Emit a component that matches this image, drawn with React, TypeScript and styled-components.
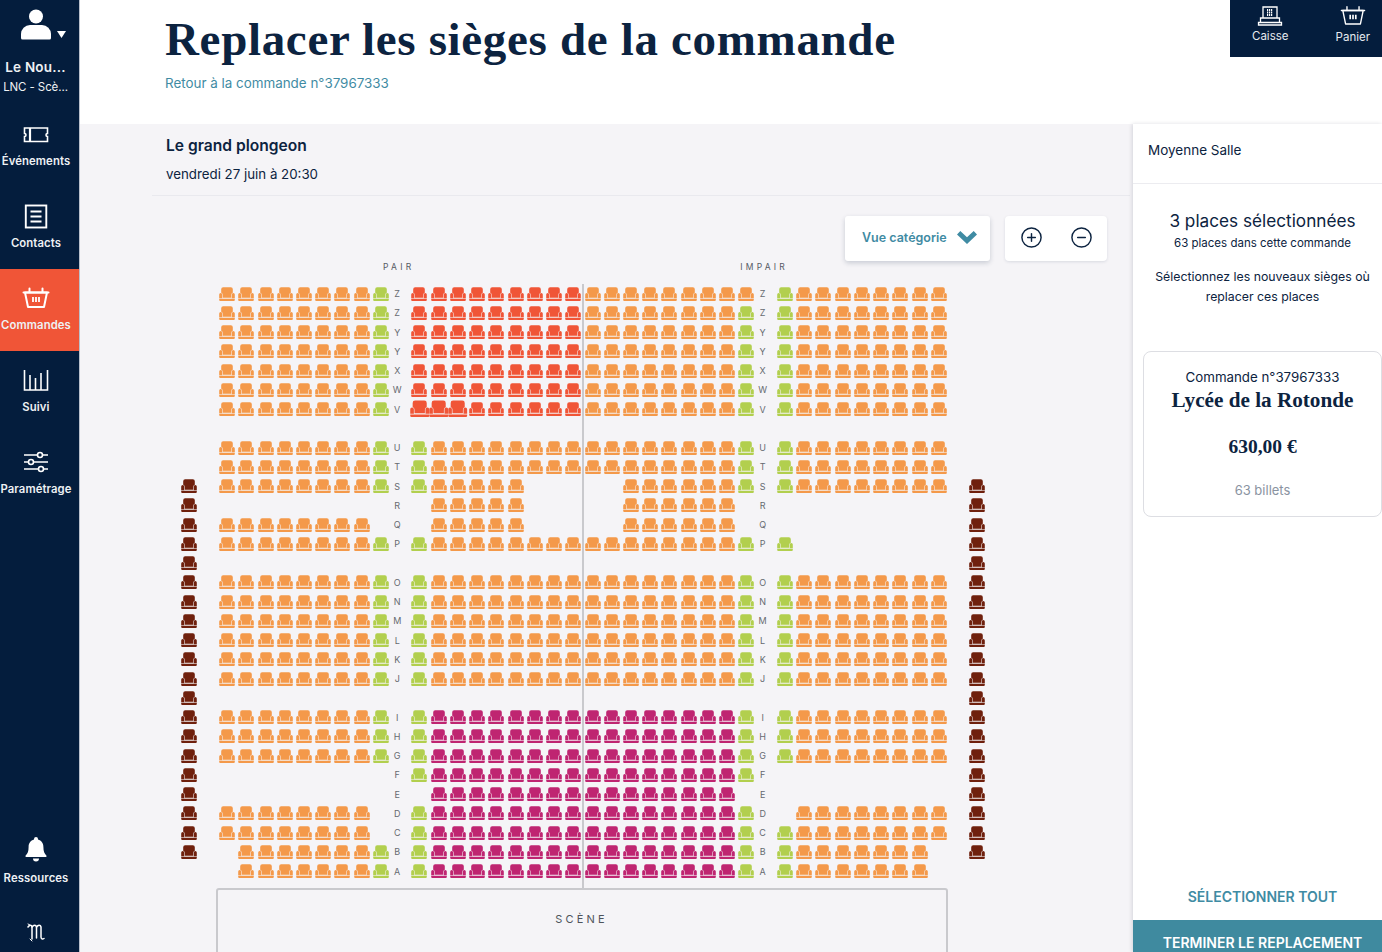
import React from "react";
import styled, { createGlobalStyle } from "styled-components";
import { CirclePlus, CircleMinus } from "lucide-react";

const NAVY = "#041d3d";
const TEAL = "#3f8ba3";
const SANS = `"Inter", "Liberation Sans", sans-serif`;
const SERIF = `"Liberation Serif", serif`;

const Global = createGlobalStyle`
  html, body { margin: 0; padding: 0; background: #f5f4f7; }
  * { box-sizing: border-box; }
`;

const Page = styled.div`
  display: flex;
  width: 1382px;
  height: 952px;
  overflow: hidden;
  font-family: ${SANS};
  color: #0c2340;
`;

const Sidebar = styled.nav`
  flex: 0 0 80px;
  width: 80px;
  display: flex;
  flex-direction: column;
  background: ${NAVY};
  border-right: 1px solid #b9c0cc;
  color: #eef1f4;
`;

const Account = styled.div`
  height: 105px;
  display: flex;
  flex-direction: column;
  align-items: center;
  padding: 9px 8px 0 0;
`;
const AccountName = styled.div`
  margin-top: 17px;
  font-size: 13.5px;
  line-height: 18px;
  font-weight: 600;
  letter-spacing: 0.2px;
`;
const AccountSub = styled.div`
  margin-top: 4px;
  font-size: 11.5px;
  line-height: 15px;
  letter-spacing: -0.1px;
`;

const NavItem = styled.a<{ $active?: boolean }>`
  height: 82px;
  flex: 0 0 82px;
  display: flex;
  flex-direction: column;
  align-items: center;
  padding: 17px 7px 0 0;
  background: ${(p) => (p.$active ? "#f05537" : "transparent")};
`;
const NavIcon = styled.svg`
  display: block;
  width: 28px;
  height: 26px;
  fill: none;
  stroke: #fff;
  stroke-width: 1.6;
`;
const NavLabel = styled.span`
  margin-top: 6px;
  font-size: 11.3px;
  line-height: 14px;
  font-weight: 600;
  letter-spacing: 0.1px;
  white-space: nowrap;
`;
const SideSpacer = styled.div`
  flex: 1;
`;
const ResourceItem = styled(NavItem)`
  height: 65px;
  flex: 0 0 65px;
  padding-top: 0;
  ${NavLabel} {
    margin-top: 9px;
  }
`;
const LogoBox = styled.div`
  height: 51px;
  display: flex;
  justify-content: center;
  padding: 20px 8px 0 0;
`;

const Main = styled.div`
  flex: 1;
  min-width: 0;
  display: flex;
  flex-direction: column;
`;

const Header = styled.header`
  flex: 0 0 124px;
  display: flex;
  justify-content: space-between;
  align-items: flex-start;
  background: #fff;
  padding-left: 85px;
`;
const TitleBlock = styled.div`
  padding-top: 12px;
`;
const Title = styled.h1`
  margin: 0;
  font-family: ${SERIF};
  font-size: 47px;
  line-height: 54px;
  font-weight: 700;
  letter-spacing: 0.67px;
  color: #0c2340;
  white-space: nowrap;
`;
const BackLink = styled.a`
  display: block;
  margin-top: 8px;
  font-size: 13.4px;
  line-height: 18px;
  color: ${TEAL};
`;
const HeaderTabs = styled.div`
  width: 152px;
  height: 57px;
  display: flex;
  justify-content: space-between;
  background: ${NAVY};
  padding: 0 12px 0 22px;
  color: #e6eaef;
`;
const HeaderTab = styled.div`
  display: flex;
  flex-direction: column;
  align-items: center;
  font-size: 11.5px;
  line-height: 14px;
`;
const TabIcon = styled.svg<{ $tight?: boolean }>`
  display: block;
  width: 26px;
  height: 25px;
  margin-top: 4px;
  margin-bottom: ${(p) => (p.$tight ? 0 : 1)}px;
  fill: none;
  stroke: #fff;
  stroke-width: 1.3;
`;

const Body = styled.div`
  flex: 1;
  min-height: 0;
  display: flex;
`;
const Content = styled.section`
  flex: 1;
  min-width: 0;
  background: #f5f4f7;
`;
const EventInfo = styled.div`
  height: 72px;
  margin-left: 72px;
  margin-right: 3px;
  padding: 12px 0 0 14px;
  border-bottom: 1px solid #e9e9ee;
`;
const EventName = styled.div`
  font-size: 15.6px;
  line-height: 20px;
  font-weight: 600;
`;
const EventDate = styled.div`
  margin-top: 9px;
  font-size: 13.3px;
  line-height: 18px;
`;
const Toolbar = styled.div`
  display: flex;
  justify-content: flex-end;
  gap: 15px;
  padding: 20px 26px 0 0;
`;
const ViewButton = styled.button`
  width: 145px;
  height: 45px;
  display: flex;
  align-items: center;
  justify-content: space-between;
  padding: 0 13px 2px 17px;
  border: 0;
  border-radius: 3px;
  background: #fff;
  box-shadow: 0 2px 5px rgba(20, 40, 70, 0.2);
  font-family: ${SANS};
  font-size: 12.5px;
  font-weight: 600;
  color: ${TEAL};
`;
const ZoomBox = styled.div`
  width: 102px;
  height: 45px;
  display: flex;
  align-items: center;
  justify-content: space-between;
  padding: 0 14px 2px 15px;
  border-radius: 4px;
  background: #fff;
  box-shadow: 0 1px 3px rgba(20, 40, 70, 0.12);
  color: #0c2340;
`;

const COLS = 42;
const PairRow = styled.div`
  display: grid;
  grid-template-columns: repeat(${COLS}, 19.245px);
  height: 23px;
  margin-left: 99px;
`;
const PairLabel = styled.div<{ $col: number }>`
  grid-column: ${(p) => p.$col};
  justify-self: center;
  margin-right: 3px;
  font-size: 8.5px;
  line-height: 12px;
  letter-spacing: 3.2px;
  color: #555a63;
  white-space: nowrap;
`;
const MapArea = styled.div`
  position: relative;
  width: max-content;
  margin-left: 99px;
`;
const SeatGrid = styled.div`
  display: grid;
  grid-template-columns: repeat(${COLS}, 19.245px);
  grid-auto-rows: 19.265px;
`;
const Cell = styled.div`
  display: flex;
  align-items: center;
  justify-content: center;
`;
const RowLetter = styled(Cell)`
  padding-right: 6px;
  font-size: 9px;
  color: #666a70;
`;
const SeatIcon = styled.svg<{ $big?: boolean }>`
  display: block;
  flex: none;
  width: ${(p) => (p.$big ? 19.4 : 16)}px;
  height: ${(p) => (p.$big ? 17.4 : 14)}px;
  color: ${(p) => p.color};
`;
const AisleLine = styled.div`
  position: absolute;
  top: 0;
  bottom: -8px;
  left: 403px;
  width: 2px;
  background: #c9c9cd;
`;
const Scene = styled.div`
  width: 732px;
  height: 80px;
  margin: 7px 0 0 135.500px;
  padding-top: 22px;
  border: 2px solid #c9c9cd;
  border-radius: 3px;
  text-align: center;
  font-size: 11px;
  line-height: 14px;
  letter-spacing: 3.2px;
  color: #4e535b;
`;

const Panel = styled.aside`
  flex: 0 0 249px;
  display: flex;
  flex-direction: column;
  background: #fff;
  box-shadow: -1px 0 4px rgba(20, 30, 60, 0.14);
`;
const PanelHead = styled.div`
  height: 60px;
  padding: 17px 0 0 15px;
  border-bottom: 1px solid #ececf0;
  font-size: 13.5px;
  line-height: 18px;
`;
const PanelBody = styled.div`
  flex: 1;
  display: flex;
  flex-direction: column;
  align-items: center;
  padding: 25px 0 0 10px;
`;
const SelCount = styled.div`
  font-size: 17.2px;
  line-height: 24px;
  white-space: nowrap;
`;
const SelSub = styled.div`
  margin-top: 2px;
  font-size: 11.5px;
  line-height: 16px;
  white-space: nowrap;
`;
const SelHint = styled.div`
  margin-top: 16px;
  width: 239px;
  text-align: center;
  font-size: 12.3px;
  line-height: 20px;
  white-space: nowrap;
`;
const OrderCard = styled.div`
  align-self: stretch;
  height: 166px;
  margin: 44px 0 0 0;
  padding-top: 16px;
  border: 1px solid #dddee3;
  border-radius: 8px;
  text-align: center;
`;
const OrderNo = styled.div`
  font-size: 13.3px;
  line-height: 18px;
`;
const OrderName = styled.div`
  margin-top: 1px;
  font-family: ${SERIF};
  font-size: 21.2px;
  line-height: 27px;
  font-weight: 700;
`;
const OrderPrice = styled.div`
  margin-top: 21px;
  font-family: ${SERIF};
  font-size: 19.5px;
  line-height: 24px;
  font-weight: 700;
`;
const OrderCount = styled.div`
  margin-top: 22px;
  font-size: 13px;
  line-height: 18px;
  color: #8a93a1;
`;
const SelectAll = styled.a`
  margin-top: auto;
  margin-bottom: 14px;
  font-size: 14px;
  line-height: 18px;
  font-weight: 600;
  color: ${TEAL};
`;
const FinishButton = styled.button`
  flex: 0 0 32px;
  height: 32px;
  padding: 14px 0 0 10px;
  border: 0;
  background: #3f8a9f;
  font-family: ${SANS};
  font-size: 14px;
  line-height: 16px;
  font-weight: 600;
  color: #fff;
  white-space: nowrap;
  overflow: hidden;
`;

const COLORS: Record<string, string> = {
  o: "#f4994a",
  g: "#b2cf4e",
  r: "#f05537",
  S: "#f05537",
  m: "#bf2571",
  d: "#6f200d",
};

function Seat({ kind }: { kind: string }) {
  return (
    <SeatIcon viewBox="0 0 16 14" color={COLORS[kind]} $big={kind === "S"}>
      <path
        fill="currentColor"
        d="M4.2.2h7.6a2 2 0 0 1 2 2v3.6a2 2 0 0 0-1.500 2v3H3.700v-3a2 2 0 0 0-1.500-2V2.200a2 2 0 0 1 2-2z"
      />
      <path
        fill="currentColor"
        d="M.2 7.500a1.500 1.500 0 0 1 3 0v3.700h9.600V7.500a1.500 1.500 0 0 1 3 0v3.700H.2z"
      />
      <path fill="currentColor" d="M.2 11.800h15.600v1.100a1 1 0 0 1-1 1H1.200a1 1 0 0 1-1-1z" />
    </SeatIcon>
  );
}

const O8 = "oooooooo";
const O16 = O8 + O8;
const M16 = "m".repeat(16);
const LEFT = O8 + "g";
const RIGHT = "g" + O8;
const NONE = ".........";
const STD = "g" + O16 + "g";
const MAG = "g" + M16 + "g";
const RED = "rrrrrrrrr";
const SHORT_LEFT = ".ooooooog";
const SHORT_RIGHT = "gooooooo.";

type Row = { label: string; left: string; mid: string; right: string };
const r = (label: string, left: string, mid: string, right: string): Row => ({ label, left, mid, right });
const GAP = r("", NONE, ".".repeat(18), NONE);

const ROWS: Row[] = [
  r("Z", LEFT, RED + "ooooooooo", RIGHT),
  r("Z", LEFT, RED + O8 + "g", RIGHT),
  r("Y", LEFT, RED + O8 + "g", RIGHT),
  r("Y", LEFT, RED + O8 + "g", RIGHT),
  r("X", LEFT, RED + O8 + "g", RIGHT),
  r("W", LEFT, RED + O8 + "g", RIGHT),
  r("V", LEFT, "SSSrrrrrr" + O8 + "g", RIGHT),
  GAP,
  r("U", LEFT, STD, RIGHT),
  r("T", LEFT, STD, RIGHT),
  r("S", LEFT, "gooooo.....oooooog", RIGHT),
  r("R", NONE, ".ooooo.....oooooo.", NONE),
  r("Q", O8 + ".", ".ooooo.....oooooo.", NONE),
  r("P", LEFT, STD, "g........"),
  GAP,
  r("O", LEFT, STD, RIGHT),
  r("N", LEFT, STD, RIGHT),
  r("M", LEFT, STD, RIGHT),
  r("L", LEFT, STD, RIGHT),
  r("K", LEFT, STD, RIGHT),
  r("J", LEFT, STD, RIGHT),
  GAP,
  r("I", LEFT, MAG, RIGHT),
  r("H", LEFT, MAG, RIGHT),
  r("G", LEFT, MAG, RIGHT),
  r("F", NONE, MAG, NONE),
  r("E", NONE, "." + M16 + ".", NONE),
  r("D", O8 + ".", MAG, "." + O8),
  r("C", O8 + ".", MAG, RIGHT),
  r("B", SHORT_LEFT, MAG, SHORT_RIGHT),
  r("A", SHORT_LEFT, MAG, SHORT_RIGHT),
];

function SeatCell({ kind }: { kind: string }) {
  return <Cell>{kind !== "." && <Seat kind={kind} />}</Cell>;
}

function SeatRow({ row, index }: { row: Row; index: number }) {
  const side = index >= 10 && index <= 29 ? "d" : ".";
  const seq = (s: string) => s.split("").map((k, i) => <SeatCell key={i} kind={k} />);
  return (
    <>
      <SeatCell kind={side} />
      <Cell />
      {seq(row.left)}
      <RowLetter>{row.label}</RowLetter>
      {seq(row.mid)}
      <RowLetter>{row.label}</RowLetter>
      {seq(row.right)}
      <Cell />
      <SeatCell kind={side} />
    </>
  );
}

const Basket = ({ weight }: { weight: number }) => (
  <g strokeWidth={weight} transform="translate(0 -1)">
    <path d="M3 7.500h22l-3 14.500H6z" strokeLinejoin="round" />
    <path d="M1.500 7.500h25M7.500 7.500V3.500M20.500 7.500V3.500" strokeLinecap="round" />
    <path d="M11 12v5M14 12v5M17 12v5" strokeWidth="1.800" />
  </g>
);

export default function App() {
  return (
    <Page>
      <Global />
      <Sidebar>
        <Account>
          <svg width="60" height="32" viewBox="0 0 60 32" style={{ display: "block" }}>
            <circle cx="30" cy="7.500" r="7" fill="#fff" />
            <path fill="#fff" d="M15 29v-4a9 9 0 0 1 9-9h12a9 9 0 0 1 9 9v4a1.500 1.500 0 0 1-1.500 1.500h-27A1.500 1.500 0 0 1 15 29z" />
            <path fill="#fff" d="M51 22h9l-4.500 7z" />
          </svg>
          <AccountName>Le Nou...</AccountName>
          <AccountSub>LNC - Scè...</AccountSub>
        </Account>
        <NavItem>
          <NavIcon viewBox="0 0 28 26">
            <path d="M2.500 6h23v5.500a1.500 1.500 0 0 0 0 3V19.500h-23v-5a1.500 1.500 0 0 0 0-3z" />
            <path d="M8 6v13.500" strokeWidth="2.200" />
          </NavIcon>
          <NavLabel>Événements</NavLabel>
        </NavItem>
        <NavItem>
          <NavIcon viewBox="0 0 28 26">
            <rect x="3.800" y="1.500" width="20.500" height="22" strokeWidth="1.900" />
            <path d="M8.500 7.500h11M8.500 12.500h11M8.500 17.500h11" strokeWidth="1.900" />
          </NavIcon>
          <NavLabel>Contacts</NavLabel>
        </NavItem>
        <NavItem $active>
          <NavIcon viewBox="0 0 28 26"><Basket weight={2} /></NavIcon>
          <NavLabel>Commandes</NavLabel>
        </NavItem>
        <NavItem>
          <NavIcon viewBox="0 0 28 26">
            <path d="M2.500 2v20h23V2M8 7v15M13.500 10v12M19 5v17" />
          </NavIcon>
          <NavLabel>Suivi</NavLabel>
        </NavItem>
        <NavItem>
          <NavIcon viewBox="0 0 28 26">
            <path d="M2 5h24M2 12h24M2 19h24" />
            <circle cx="18" cy="5" r="2.500" fill={NAVY} />
            <circle cx="9" cy="12" r="2.500" fill={NAVY} />
            <circle cx="19" cy="19" r="2.500" fill={NAVY} />
          </NavIcon>
          <NavLabel>Paramétrage</NavLabel>
        </NavItem>
        <SideSpacer />
        <ResourceItem>
          <NavIcon viewBox="0 0 28 26">
            <path
              fill="#fff"
              stroke="none"
              d="M14 1a2 2 0 0 1 2 2v.6c3.400.9 5.400 3.800 5.400 7.400 0 4.500 1 6.600 3 8.500V21H3.600v-1.500c2-1.900 3-4 3-8.500 0-3.600 2-6.500 5.400-7.400V3a2 2 0 0 1 2-2zM11 22.500h6a3 3 0 0 1-6 0z"
            />
          </NavIcon>
          <NavLabel>Ressources</NavLabel>
        </ResourceItem>
        <LogoBox>
          <svg width="20" height="22" viewBox="0 0 20 22" fill="none" stroke="#fff" strokeWidth="1.500" strokeLinecap="round">
            <path d="M2 6c1.500-2.500 3.500-2.500 4 0v12" />
            <path d="M6 6c1.500-2.500 4-2.500 4.500 0v11" />
            <path d="M10.500 6c1.500-2.500 4-2.500 4.500 0v10c0 2 1.500 2.500 3 1.500" />
            <path d="M2 3l2 1M4 18l2 2" strokeWidth="1" />
          </svg>
        </LogoBox>
      </Sidebar>
      <Main>
        <Header>
          <TitleBlock>
            <Title>Replacer les sièges de la commande</Title>
            <BackLink>Retour à la commande n°37967333</BackLink>
          </TitleBlock>
          <HeaderTabs>
            <HeaderTab>
              <TabIcon viewBox="0 0 26 25" $tight>
                <path d="M6 3h14v11H6zM3.500 14h19v4.500h-19zM1.500 18.500h23v2.500h-23z" />
                <path d="M10 6h6M10 8.500h6M10 11h6" strokeWidth="1.800" strokeDasharray="1.200 .8" />
              </TabIcon>
              Caisse
            </HeaderTab>
            <HeaderTab>
              <TabIcon viewBox="0 0 28 26"><Basket weight={1.500} /></TabIcon>
              Panier
            </HeaderTab>
          </HeaderTabs>
        </Header>
        <Body>
          <Content>
            <EventInfo>
              <EventName>Le grand plongeon</EventName>
              <EventDate>vendredi 27 juin à 20:30</EventDate>
            </EventInfo>
            <Toolbar>
              <ViewButton>
                Vue catégorie
                <svg width="20" height="13" viewBox="0 0 20 13">
                  <path fill={TEAL} d="M0 3.500 3.300 0 10 6.300 16.700 0 20 3.500 10 13z" />
                </svg>
              </ViewButton>
              <ZoomBox>
                <CirclePlus size={23} strokeWidth={1.5} />
                <CircleMinus size={23} strokeWidth={1.5} />
              </ZoomBox>
            </Toolbar>
            <PairRow>
              <PairLabel $col={12}>PAIR</PairLabel>
              <PairLabel $col={31}>IMPAIR</PairLabel>
            </PairRow>
            <MapArea>
              <SeatGrid>
                {ROWS.map((row, i) => (
                  <SeatRow key={i} row={row} index={i} />
                ))}
              </SeatGrid>
              <AisleLine />
            </MapArea>
            <Scene>SCÈNE</Scene>
          </Content>
          <Panel>
            <PanelHead>Moyenne Salle</PanelHead>
            <PanelBody>
              <SelCount>3 places sélectionnées</SelCount>
              <SelSub>63 places dans cette commande</SelSub>
              <SelHint>
                Sélectionnez les nouveaux sièges où
                <br />
                replacer ces places
              </SelHint>
              <OrderCard>
                <OrderNo>Commande n°37967333</OrderNo>
                <OrderName>Lycée de la Rotonde</OrderName>
                <OrderPrice>630,00 €</OrderPrice>
                <OrderCount>63 billets</OrderCount>
              </OrderCard>
              <SelectAll>SÉLECTIONNER TOUT</SelectAll>
            </PanelBody>
            <FinishButton>TERMINER LE REPLACEMENT</FinishButton>
          </Panel>
        </Body>
      </Main>
    </Page>
  );
}
